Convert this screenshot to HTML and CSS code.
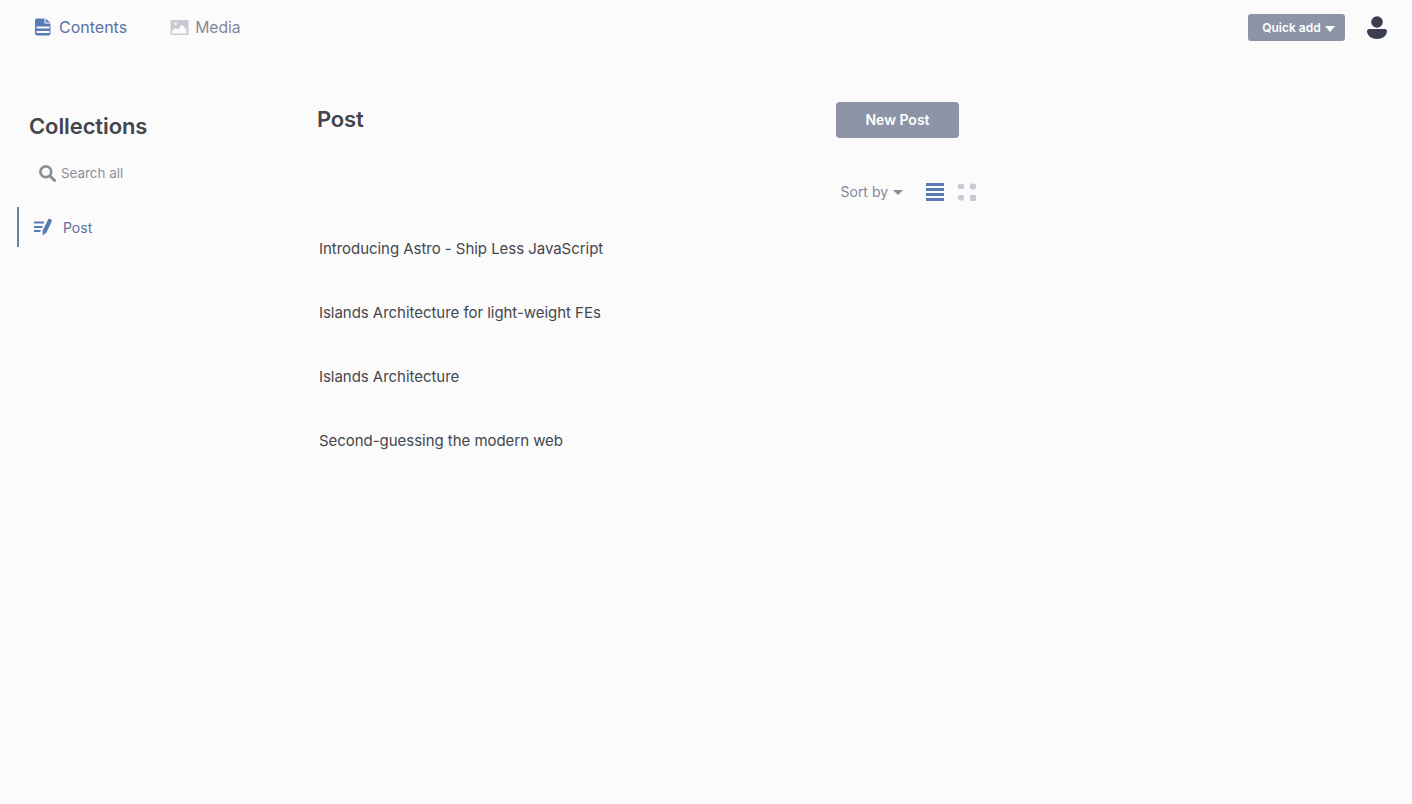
FILE: index.html
```html
<!DOCTYPE html>
<html>

<head>
    <meta charset="UTF-8">
    <title>Contents</title>
    <link rel="stylesheet" href="styles.css">
</head>

<body>
    <header class="topbar">
        <nav class="tabs">
            <a class="tab tab-active">
                <svg class="tab-icon" width="16" height="18" viewBox="0 0 16 18">
                    <path fill="#5a7ab5" d="M2 0.500h7.500v5h6V15.500a2 2 0 0 1-2 2H2a2 2 0 0 1-2-2V2.500a2 2 0 0 1 2-2z" />
                    <path fill="#5a7ab5" d="M10.500 0.800 15.500 4.500h-5z" />
                    <rect x="1.500" y="8.500" width="13" height="2" fill="#fbfbfc" />
                    <rect x="1.500" y="13" width="13" height="2" fill="#fbfbfc" />
                </svg>
                Contents
            </a>
            <a class="tab">
                <svg class="tab-icon" width="19" height="17" viewBox="0 0 19 17">
                    <rect x="0.500" y="1" width="18" height="15" fill="#c9cad1" />
                    <path fill="#fbfbfc" d="M2 14.500v-2.500l3.500-3 2.500 1.500 4-5 4.500 5.500v3.500z" />
                    <circle cx="5.500" cy="4.800" r="1.300" fill="#fbfbfc" />
                </svg>
                Media
            </a>
        </nav>
        <div class="topbar-right">
            <button class="quick-add">Quick add <span class="caret caret-white"></span></button>
            <svg class="avatar" width="20" height="23" viewBox="0 0 20 23">
                <circle cx="10" cy="6" r="5.800" fill="#3b3f51" />
                <path fill="#3b3f51" d="M0 15c0-1 1-2 2-2h16c1 0 2 1 2 2 0 5-5 8-10 8s-10-3-10-8z" />
            </svg>
        </div>
    </header>

    <div class="layout">
        <aside class="sidebar">
            <h2 class="sidebar-title">Collections</h2>
            <div class="search">
                <svg width="17" height="17" viewBox="0 0 17 17">
                    <circle cx="6.800" cy="6.800" r="5.400" fill="none" stroke="#8b8e98" stroke-width="2.800" />
                    <path d="M11 11l4.500 4.500" stroke="#8b8e98" stroke-width="3" stroke-linecap="round" />
                </svg>
                <span>Search all</span>
            </div>
            <a class="collection">
                <svg width="19" height="18" viewBox="0 0 19 18">
                    <path fill="#5a7ab5" d="M0 3.500h10v2H0zM0 8h8.500v2H0zM0 12h6.500v2H0z" />
                    <path fill="#5a7ab5" d="M14.200 1.200c.8-1.200 3.800 0 3.700 1.700L12.500 14.500l-3.700 3-.2-4.700z" />
                </svg>
                Post
            </a>
        </aside>

        <main class="content">
            <div class="content-head">
                <h1 class="content-title">Post</h1>
                <button class="new-post">New Post</button>
            </div>
            <div class="toolbar">
                <span class="sort">Sort by <span class="caret caret-grey"></span></span>
                <svg class="view-icon" width="18" height="18" viewBox="0 0 18 18">
                    <path fill="#5a7ab5" d="M0 0h18v3H0zM0 5h18v3H0zM0 10h18v3H0zM0 15h18v3H0z" />
                </svg>
                <svg class="view-icon" width="18" height="18" viewBox="0 0 18 18">
                    <rect x="0" y="1" width="6" height="5" rx="1" fill="#c9cad1" />
                    <rect x="12" y="0.500" width="6" height="6" rx="2" fill="#c9cad1" />
                    <rect x="0" y="12" width="6" height="5.500" rx="2" fill="#c9cad1" />
                    <rect x="12" y="12" width="6" height="6" rx="1" fill="#c9cad1" />
                </svg>
            </div>
            <ul class="posts">
                <li>Introducing Astro - Ship Less JavaScript</li>
                <li>Islands Architecture for light-weight FEs</li>
                <li>Islands Architecture</li>
                <li>Second-guessing the modern web</li>
            </ul>
        </main>
    </div>
</body>

</html>
```
FILE: styles.css
```css
body {
    margin: 0;
    height: 804px;
    overflow: hidden;
    background: #fbfbfc;
    font-family: Inter, "Liberation Sans", sans-serif;
    color: #44464b;
}

.topbar {
    height: 54px;
    display: flex;
    justify-content: space-between;
    align-items: center;
    padding: 0 25px 0 35px;
}

.tabs {
    display: flex;
    gap: 43px;
}

.tab {
    display: flex;
    align-items: center;
    gap: 8px;
    font-size: 16px;
    color: #85889a;
}

.tab + .tab {
    gap: 6px;
    font-size: 15.700px;
}

.tab-active {
    color: #5b71a0;
}

.topbar-right {
    display: flex;
    align-items: center;
    gap: 22px;
    padding-top: 1px;
}

.quick-add {
    width: 97px;
    height: 27px;
    padding: 0 0 0 4px;
    border: 0;
    border-radius: 3px;
    background: #8d94a5;
    color: #fff;
    font: 600 12px Inter, sans-serif;
}

.caret {
    display: inline-block;
    width: 0;
    height: 0;
    vertical-align: middle;
    border-left: 5px solid transparent;
    border-right: 5px solid transparent;
}

.caret-white {
    margin-left: 1px;
    border-top: 6px solid #fff;
}

.caret-grey {
    margin-left: 1px;
    border-top: 5px solid #8b8e98;
}

.layout {
    display: flex;
}

.sidebar {
    width: 300px;
    padding: 57px 0 0 17px;
    box-sizing: border-box;
}

.sidebar-title {
    margin: 0 0 0 12px;
    font-size: 22px;
    line-height: 30px;
    font-weight: 600;
    letter-spacing: -0.100px;
}

.search {
    display: flex;
    align-items: center;
    gap: 5px;
    margin: 22px 0 0 22px;
    font-size: 13.400px;
    line-height: 20px;
    color: #8b8e98;
}

.collection {
    display: flex;
    align-items: center;
    gap: 10px;
    height: 40px;
    margin-top: 24px;
    padding-left: 15px;
    border-left: 2px solid #6b80ab;
    font-size: 14px;
    color: #5b71a0;
}

.content {
    width: 660px;
    padding-left: 17px;
}

.content-head {
    display: flex;
    justify-content: space-between;
    align-items: center;
    width: 642px;
    margin-top: 48px;
}

.content-title {
    margin: 0;
    padding-bottom: 2px;
    font-size: 22px;
    font-weight: 600;
    letter-spacing: -0.200px;
}

.new-post {
    width: 123px;
    height: 36px;
    padding: 0 0 1px;
    border: 0;
    border-radius: 4px;
    background: #8d94a5;
    color: #fff;
    font: 600 14px Inter, sans-serif;
}

.toolbar {
    display: flex;
    justify-content: flex-end;
    align-items: center;
    gap: 14px;
    height: 18px;
    margin-top: 45px;
    padding-right: 1px;
}

.sort {
    margin: 0 9px 2px 0;
    font-size: 14px;
    color: #85889a;
}

.posts {
    list-style: none;
    margin: 16px 0 0;
    padding: 0 0 0 2px;
}

.posts li {
    height: 64px;
    line-height: 64px;
    font-size: 15px;
    letter-spacing: -0.040px;
}
```
